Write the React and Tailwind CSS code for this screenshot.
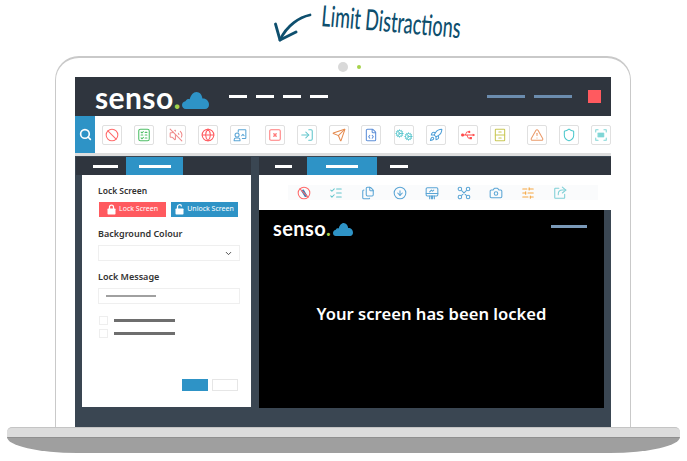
// Senso "Limit Distractions" laptop mockup
import {
  Ban, VolumeOff, Globe, LogIn, Send, FileCode, Cog, Rocket, TriangleAlert, Shield, Search, ListChecks,
  Files, CircleArrowDown, Camera, SlidersHorizontal, ChevronDown,
} from 'lucide-react'
import { FaUsb } from 'react-icons/fa'

// icons the packages don't have, same props as a lucide icon
const Draw = ({ size = 14, strokeWidth = 1.8, className, children }) => (
  <svg width={size} height={size} viewBox="0 0 24 24" fill="none" stroke="currentColor" strokeWidth={strokeWidth} strokeLinecap="round" strokeLinejoin="round" className={className}>
    {children}
  </svg>
)

const ChecklistBox = (p) => (
  <Draw {...p}>
    <rect x="3" y="2" width="18" height="20" rx="3" />
    <path d="M7 7l1.500 1.500L11 6M14 7.500h3M7 12h3M14 12h3M7 17l1.500 1.500L11 16M14 17h3" />
  </Draw>
)
const Classroom = (p) => (
  <Draw {...p}>
    <path d="M9 7V4a1 1 0 0 1 1-1h11a1 1 0 0 1 1 1v13a1 1 0 0 1-1 1h-5" />
    <circle cx="7" cy="12" r="3.500" />
    <path d="M2 22v-2a3 3 0 0 1 3-3h4a3 3 0 0 1 3 3v2z" />
    <path d="M15 13l2-2 2 2" />
  </Draw>
)
const CloseBox = (p) => (
  <Draw {...p}>
    <rect x="3" y="3" width="18" height="18" rx="2" />
    <path d="M10 10l4 4M14 10l-4 4" strokeWidth="2.400" />
  </Draw>
)
const Gears = ({ className }) => (
  <div className={`flex items-center ${className}`}>
    <Cog size={9} strokeWidth={2.200} className="-mt-[3px]" />
    <Cog size={9} strokeWidth={2.200} className="mt-[3px]" />
  </div>
)
const Usb = ({ className }) => <FaUsb size={14} className={className} />
const Drawer = (p) => (
  <Draw {...p}>
    <rect x="4" y="2" width="16" height="20" rx="1" />
    <path d="M4 12h16M10 7h4M10 17h4" />
  </Draw>
)
const ScanBlock = (p) => (
  <Draw {...p}>
    <path d="M3 7V3h4M17 3h4v4M21 17v4h-4M7 21H3v-4" />
    <rect x="7" y="8.500" width="10" height="7" fill="currentColor" strokeWidth="1" />
  </Draw>
)
const NoCompass = (p) => (
  <Draw {...p}>
    <path d="M8 8l3-1 6 10-3 1z" fill="#3f7fb5" stroke="#3f7fb5" />
    <circle cx="12" cy="12" r="10" />
    <path d="M5 5l14 14" />
  </Draw>
)
const ScreenShare = (p) => (
  <Draw {...p}>
    <rect x="2" y="3" width="20" height="14" rx="2" />
    <path d="M2 13h20M8 10l3-3 2 2 2-2M8 22v-5M16 22v-5M11 22v-5M13 22v-5" />
  </Draw>
)
const Nodes = (p) => (
  <Draw {...p}>
    <circle cx="5" cy="5" r="3" />
    <circle cx="19" cy="5" r="3" />
    <circle cx="5" cy="19" r="3" />
    <circle cx="19" cy="19" r="3" />
    <path d="M8 8l8 8M16 8l-8 8" />
  </Draw>
)
const ShareOut = (p) => (
  <Draw {...p}>
    <path d="M10 4H4a1 1 0 0 0-1 1v15a1 1 0 0 0 1 1h15a1 1 0 0 0 1-1v-6" />
    <path d="M16 2l6 5-6 5" />
    <path d="M22 7h-6c-4 0-7 3-7 7v1" />
  </Draw>
)
const PadLock = ({ open }) => (
  <svg width="9" height="11" viewBox="0 0 18 22" className="shrink-0">
    <path d={open ? 'M5 10V6a4 4 0 0 1 8-1' : 'M5 10V6a4 4 0 0 1 8 0v4'} fill="none" stroke="white" strokeWidth="2.500" />
    <rect x="1" y="9" width="16" height="12" rx="1.500" fill="white" />
  </svg>
)

const topIcons = [
  { Icon: Ban, color: 'text-[#ff6b6b]' },
  { Icon: ChecklistBox, color: 'text-[#4fbf67]' },
  { Icon: VolumeOff, color: 'text-[#f08a8a]' },
  { Icon: Globe, color: 'text-[#ff5a5f]' },
  { Icon: Classroom, color: 'text-[#5aa5d5]' },
  { Icon: CloseBox, color: 'text-[#ff7b7b]', extra: 'ml-[3px]' },
  { Icon: LogIn, color: 'text-[#62c6cc]' },
  { Icon: Send, color: 'text-[#e58a4e]' },
  { Icon: FileCode, color: 'text-[#5d8fd8]' },
  { Icon: Gears, color: 'text-[#56c5cc]', extra: 'ml-[1px]' },
  { Icon: Rocket, color: 'text-[#4fa0d8]' },
  { Icon: Usb, color: 'text-[#ff4a4a]' },
  { Icon: Drawer, color: 'text-[#c9c755]' },
  { Icon: TriangleAlert, color: 'text-[#ea9a6a]', extra: 'ml-[5px]' },
  { Icon: Shield, color: 'text-[#4cc8cc]' },
  { Icon: ScanBlock, color: 'text-[#7fd6d6]' },
]

const viewIcons = [
  { Icon: NoCompass, color: 'text-[#ff6b6b]' },
  { Icon: ListChecks, color: 'text-[#62c6cc]' },
  { Icon: Files, color: 'text-[#5aa5d5]' },
  { Icon: CircleArrowDown, color: 'text-[#5aa5d5]' },
  { Icon: ScreenShare, color: 'text-[#5aa5d5]' },
  { Icon: Nodes, color: 'text-[#5aa5d5]' },
  { Icon: Camera, color: 'text-[#5aa5d5]' },
  { Icon: SlidersHorizontal, color: 'text-[#f5a742]' },
  { Icon: ShareOut, color: 'text-[#7fd0d6]' },
]

function Cloud({ className }) {
  return (
    <svg viewBox="0 0 28 16" preserveAspectRatio="none" className={className}>
      <path
        d="M4 16C1.600 16 0 14.400 0 12.300c0-2 1.500-3.500 3.500-3.700C5 6.600 6.600 6.300 8 6.800 9 3 11.800 0 15 0c3.300 0 5.800 2.600 6.200 6.200 3.700-.3 6.800 2.400 6.800 5.700 0 2.300-1.700 4.100-4 4.100z"
        fill="#2e93c6"
      />
    </svg>
  )
}

function Logo({ size, cloud }) {
  return (
    <div className="flex items-end">
      <span className={`${size} font-['Lato',sans-serif] font-bold text-white leading-none tracking-[0.4px]`}>
        senso<span className="text-[#a6d24a]">.</span>
      </span>
      <Cloud className={cloud} />
    </div>
  )
}

function Bar({ className }) {
  return <div className={`h-[3px] ${className}`} />
}

export default function App() {
  return (
    <div className="w-[687px] h-[461px] bg-white overflow-hidden flex flex-col font-['Noto_Sans',sans-serif]">
      {/* annotation */}
      <div className="h-[56px] flex pl-[274px] shrink-0">
        <svg width="38" height="32" viewBox="0 0 38 32" className="mt-[11px] text-[#0e4f6e]" fill="none" stroke="currentColor" strokeWidth="2.800" strokeLinecap="round" strokeLinejoin="round">
          <path d="M36 4 C26 6 13 14 6 29" />
          <path d="M1.500 13 L6 29 L22 21" />
        </svg>
        <span className="ml-[11px] mt-[1px] h-[28px] font-['Lato',sans-serif] font-medium text-[29px] leading-[28px] text-[#0e4f6e] whitespace-nowrap origin-top-left rotate-[5deg] scale-x-[0.62]">
          Limit Distractions
        </span>
      </div>

      {/* lid */}
      <div className="ml-[55px] w-[576px] h-[371px] shrink-0 rounded-t-[24px] border-t-2 border-x border-[#c9c9c9] px-[19px] flex flex-col">
        <div className="h-[19px] flex items-center justify-center gap-[9px] pl-[13px] pb-[2px] shrink-0">
          <div className="w-[10px] h-[10px] rounded-full bg-[#d9d9d9]" />
          <div className="w-[4px] h-[4px] rounded-full bg-[#a6d24a]" />
        </div>

        <div className="flex-1 flex flex-col bg-[#3a4652] min-h-0">
          {/* header */}
          <div className="h-[39px] bg-[#2f353e] flex items-center shrink-0">
            <div className="ml-[20px] w-[134px] flex">
              <Logo size="text-[30px]" cloud="w-[27px] h-[17px] mb-[3px] ml-[1px]" />
            </div>
            <div className="flex gap-[9px]">
              <Bar className="w-[18px] bg-white" />
              <Bar className="w-[18px] bg-white" />
              <Bar className="w-[18px] bg-white" />
              <Bar className="w-[18px] bg-white" />
            </div>
            <div className="ml-auto flex items-center gap-[9px]">
              <Bar className="w-[38px] bg-[#6b8cae]" />
              <Bar className="w-[38px] bg-[#6b8cae]" />
            </div>
            <div className="ml-[16px] mr-[10px] w-[13px] h-[13px] bg-[#ff5a5f]" />
          </div>

          {/* app toolbar */}
          <div className="h-[40px] bg-white border-b-[3px] border-[#dedede] flex shrink-0">
            <div className="w-[20px] h-full bg-[#2e93c6] flex items-center justify-center">
              <Search size={13} strokeWidth={3} className="text-white" />
            </div>
            <div className="ml-[7px] flex items-center gap-[12px]">
              {topIcons.map(({ Icon, color, extra }, i) => (
                <div key={i} className={`w-[20px] h-[20px] border border-[#e0e0e0] rounded-[2px] flex items-center justify-center ${extra || ''}`}>
                  <Icon size={14} strokeWidth={1.800} className={color} />
                </div>
              ))}
            </div>
          </div>

          {/* panels */}
          <div className="flex-1 flex gap-[8px] pl-[1px] pt-[1px] min-h-0">
            {/* left panel */}
            <div className="w-[175px] flex flex-col shrink-0">
              <div className="h-[18px] bg-[#2f353e] flex shrink-0">
                <div className="w-[50px] flex items-center justify-end pr-[8px]">
                  <Bar className="w-[25px] bg-white" />
                </div>
                <div className="w-[57px] bg-[#2e93c6] flex items-center justify-center">
                  <Bar className="w-[32px] bg-white" />
                </div>
              </div>
              <div className="ml-[6px] h-[232px] bg-white pl-[16px] pr-[11px] flex flex-col text-[#333333]">
                <div className="mt-[11px] text-[8.500px] leading-[10px] font-semibold">Lock Screen</div>
                <div className="mt-[6px] flex gap-[5px] pl-[1px] text-white text-[7px]">
                  <div className="w-[67px] h-[15px] shrink-0 bg-[#ff5a5f] flex items-center justify-center gap-[3px]">
                    <PadLock />
                    Lock Screen
                  </div>
                  <div className="w-[67px] h-[15px] shrink-0 bg-[#2e93c6] flex items-center justify-center gap-[3px]">
                    <PadLock open />
                    Unlock Screen
                  </div>
                </div>
                <div className="mt-[12px] text-[9px] leading-[10px] font-semibold">Background Colour</div>
                <div className="mt-[6px] w-[142px] h-[16px] border border-[#efefef] flex items-center justify-end pr-[6px]">
                  <ChevronDown size={9} strokeWidth={2.500} className="text-[#444444]" />
                </div>
                <div className="mt-[11px] text-[9px] leading-[10px] font-semibold">Lock Message</div>
                <div className="mt-[6px] w-[142px] h-[16px] border border-[#efefef] flex items-center pl-[7px]">
                  <div className="w-[50px] h-[2px] bg-[#a0a0a0]" />
                </div>
                <div className="mt-[12px] flex items-center gap-[6px] pl-[1px]">
                  <div className="w-[9px] h-[9px] border border-[#eeeeee]" />
                  <Bar className="w-[61px] bg-[#6e6e6e]" />
                </div>
                <div className="mt-[4px] flex items-center gap-[6px] pl-[1px]">
                  <div className="w-[9px] h-[9px] border border-[#eeeeee]" />
                  <Bar className="w-[61px] bg-[#6e6e6e]" />
                </div>
                <div className="mt-auto mb-[16px] flex justify-end gap-[4px] pr-[2px]">
                  <div className="w-[26px] h-[12px] bg-[#2e93c6]" />
                  <div className="w-[26px] h-[12px] border border-[#e6e6e6]" />
                </div>
              </div>
            </div>

            {/* right panel */}
            <div className="flex-1 flex flex-col min-w-0">
              <div className="h-[18px] bg-[#2f353e] flex items-center shrink-0">
                <Bar className="ml-[16px] w-[17px] bg-white" />
                <div className="ml-[15px] w-[70px] h-full bg-[#2e93c6] flex items-center justify-center">
                  <Bar className="w-[32px] bg-white" />
                </div>
                <Bar className="ml-[13px] w-[18px] bg-white" />
              </div>
              <div className="h-[35px] bg-white flex items-center pl-[29px] shrink-0">
                <div className="w-[310px] h-[15px] bg-[#fafbfc] flex items-center pl-[9px] gap-[18px]">
                  {viewIcons.map(({ Icon, color }, i) => (
                    <Icon key={i} size={14} strokeWidth={1.800} className={color} />
                  ))}
                </div>
              </div>
              <div className="mr-[7px] h-[198px] bg-black flex flex-col">
                <div className="h-[22px] flex items-start justify-between pl-[14px] pr-[17px] pt-[8px]">
                  <Logo size="text-[20px]" cloud="w-[20px] h-[13px] mb-[2px] ml-[2px]" />
                  <Bar className="mt-[7px] w-[36px] bg-[#7a99b8]" />
                </div>
                <div className="mt-[70px] text-center text-white text-[16.600px] leading-[24px] font-semibold">
                  Your screen has been locked
                </div>
              </div>
            </div>
          </div>
        </div>
      </div>

      {/* base */}
      <div className="ml-[7px] w-[673px] h-[10px] shrink-0 rounded-t-[5px] bg-[#dcdcdc] border-t border-[#c4c4c4]" />
      <div className="ml-[7px] w-[673px] h-[16px] shrink-0 bg-[#9f9f9f] border-t border-[#8f8f8f] rounded-b-[70px_16px]" />
    </div>
  )
}
